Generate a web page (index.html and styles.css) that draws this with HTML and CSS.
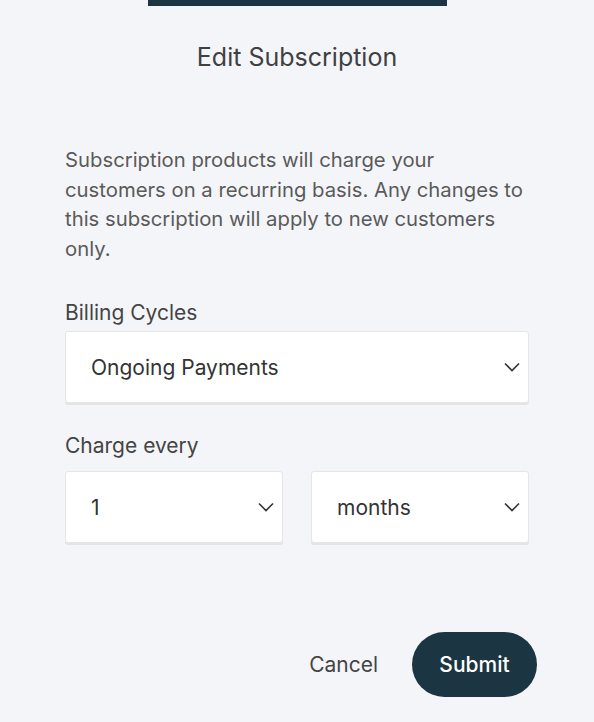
FILE: index.html
```html
<!DOCTYPE html>
<html lang="en">
<head>
    <meta charset="UTF-8">
    <meta name="viewport" content="width=device-width, initial-scale=1.0">
    <title>Edit Subscription</title>
    <link rel="stylesheet" href="styles.css">
</head>
<body>
    <div class="topbar"></div>
    <div class="modal">
        <h1 class="title">Edit Subscription</h1>
        <p class="intro">Subscription products will charge your customers on a recurring basis. Any changes to this subscription will apply to new customers only.</p>

        <div class="field">
            <label>Billing Cycles</label>
            <div class="select">
                <span>Ongoing Payments</span>
                <svg class="chevron" viewBox="0 0 16 10" width="16" height="10"><path d="M1 1.5l7 7 7-7" fill="none" stroke="#333" stroke-width="1.6"/></svg>
            </div>
        </div>

        <div class="field charge">
            <label>Charge every</label>
            <div class="row">
                <div class="select">
                    <span>1</span>
                    <svg class="chevron" viewBox="0 0 16 10" width="16" height="10"><path d="M1 1.5l7 7 7-7" fill="none" stroke="#333" stroke-width="1.6"/></svg>
                </div>
                <div class="select">
                    <span>months</span>
                    <svg class="chevron" viewBox="0 0 16 10" width="16" height="10"><path d="M1 1.5l7 7 7-7" fill="none" stroke="#333" stroke-width="1.6"/></svg>
                </div>
            </div>
        </div>

        <div class="actions">
            <button class="cancel">Cancel</button>
            <button class="submit">Submit</button>
        </div>
    </div>
</body>
</html>
```

FILE: styles.css
```css
body {
    margin: 0;
    background-color: #f4f5f9;
    font-family: 'Inter', sans-serif;
    color: #444;
}

.topbar {
    width: 299px;
    height: 6px;
    margin: 0 auto;
    background-color: #1b3642;
}

.modal {
    padding: 0 65px;
}

.title {
    margin: 31px 0 0;
    text-align: center;
    font-size: 25px;
    font-weight: 400;
    line-height: 40px;
    color: #404040;
}

.intro {
    margin: 68px 0 0;
    font-size: 20.3px;
    line-height: 29.5px;
    color: #5a5a5a;
}

.field {
    margin-top: 35px;
}

.field.charge {
    margin-top: 28px;
}

label {
    display: block;
    font-size: 21px;
    line-height: 30px;
    color: #444;
    margin-bottom: 3px;
}

.charge label {
    margin-bottom: 10px;
}

.select {
    display: flex;
    align-items: center;
    justify-content: space-between;
    height: 70px;
    padding: 0 8px 0 25px;
    background-color: #fff;
    border: 1px solid #e6e6e8;
    border-radius: 3px;
    box-shadow: 0 2px 0 #e4e4e6;
    font-size: 21px;
    color: #333;
}

.row {
    display: flex;
    gap: 28px;
}

.row .select {
    flex: 1;
}

.actions {
    display: flex;
    justify-content: flex-end;
    align-items: center;
    gap: 34px;
    margin-top: 89px;
    margin-right: -8px;
}

button {
    font-family: 'Inter', sans-serif;
    font-size: 21px;
    border: none;
    cursor: pointer;
}

.cancel {
    background: none;
    color: #444;
    padding: 0;
}

.submit {
    width: 125px;
    height: 65px;
    border-radius: 33px;
    background-color: #1b3642;
    color: #fff;
    font-weight: 500;
}
```
